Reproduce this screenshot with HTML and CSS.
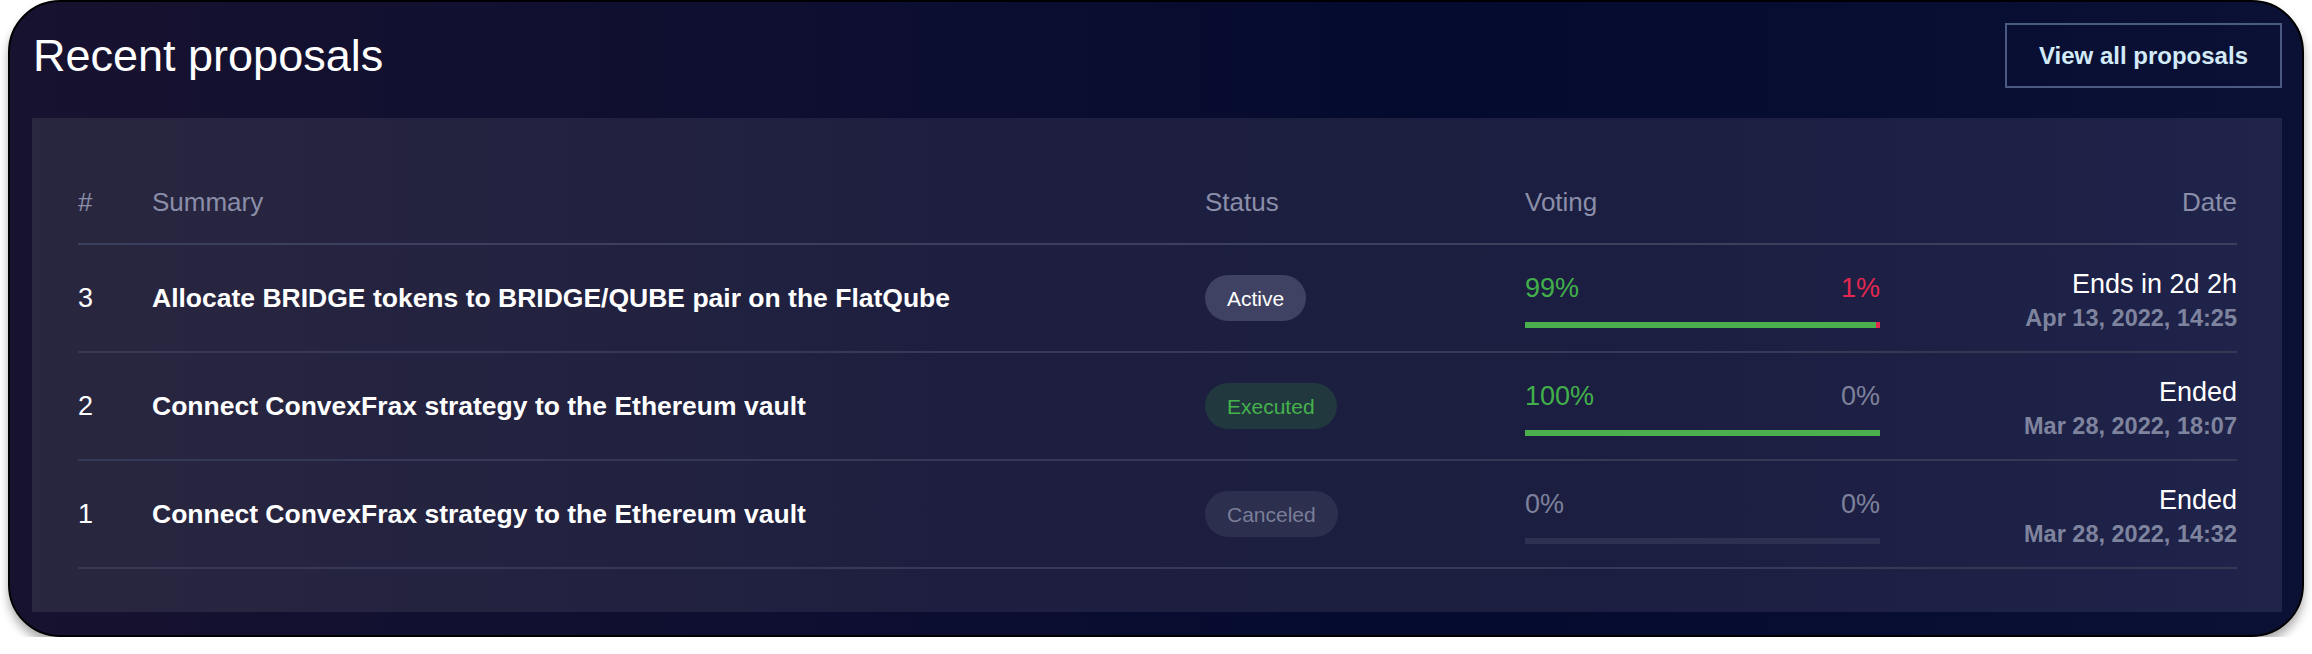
FILE: index.html
```html
<!DOCTYPE html>
<html lang="en">
<head>
<meta charset="utf-8">
<title>Recent proposals</title>
<link rel="stylesheet" href="styles.css">
</head>
<body>
<section class="card">
  <header class="card-head">
    <h2 class="card-title">Recent proposals</h2>
    <a class="btn-outline" href="#">View all proposals</a>
  </header>
  <div class="panel">
    <div class="row row-head">
      <div class="cell">#</div>
      <div class="cell">Summary</div>
      <div class="cell">Status</div>
      <div class="cell">Voting</div>
      <div class="cell cell-right">Date</div>
    </div>

    <div class="row">
      <div class="cell num">3</div>
      <div class="cell summary">Allocate BRIDGE tokens to BRIDGE/QUBE pair on the FlatQube</div>
      <div class="cell"><span class="pill pill-active">Active</span></div>
      <div class="cell voting">
        <div class="vote-nums"><span class="green">99%</span><span class="red">1%</span></div>
        <div class="bar"><span class="bar-yes" style="width:99%"></span><span class="bar-no" style="width:1%"></span></div>
      </div>
      <div class="cell date">
        <div class="date-main">Ends in 2d 2h</div>
        <div class="date-sub">Apr 13, 2022, 14:25</div>
      </div>
    </div>

    <div class="row">
      <div class="cell num">2</div>
      <div class="cell summary">Connect ConvexFrax strategy to the Ethereum vault</div>
      <div class="cell"><span class="pill pill-executed">Executed</span></div>
      <div class="cell voting">
        <div class="vote-nums"><span class="green">100%</span><span class="grey">0%</span></div>
        <div class="bar"><span class="bar-yes" style="width:100%"></span></div>
      </div>
      <div class="cell date">
        <div class="date-main">Ended</div>
        <div class="date-sub">Mar 28, 2022, 18:07</div>
      </div>
    </div>

    <div class="row">
      <div class="cell num">1</div>
      <div class="cell summary">Connect ConvexFrax strategy to the Ethereum vault</div>
      <div class="cell"><span class="pill pill-canceled">Canceled</span></div>
      <div class="cell voting">
        <div class="vote-nums"><span class="grey">0%</span><span class="grey">0%</span></div>
        <div class="bar bar-empty"></div>
      </div>
      <div class="cell date">
        <div class="date-main">Ended</div>
        <div class="date-sub">Mar 28, 2022, 14:32</div>
      </div>
    </div>
  </div>
</section>
</body>
</html>
```

FILE: styles.css
```css
* { box-sizing: border-box; }

html, body {
  margin: 0;
  padding: 0;
  background: #ffffff;
}

body {
  font-family: "Liberation Sans", Arial, sans-serif;
  color: #ffffff;
}

.card {
  margin: 0 8px;
  height: 637px;
  border: 2px solid #000000;
  border-radius: 52px;
  padding: 21px 20px 22px 22px;
  background: linear-gradient(90deg, #17122f 0%, #0c0e31 40%, #040b2f 62%, #0b1035 100%);
  box-shadow: 0 7px 10px rgba(0, 0, 0, 0.32);
}

.card-head {
  display: flex;
  align-items: center;
  justify-content: space-between;
  height: 65px;
  margin-bottom: 30px;
}

.card-title {
  margin: 0;
  font-size: 45px;
  font-weight: 400;
  line-height: 52px;
  padding-left: 1px;
  color: #ffffff;
}

.btn-outline {
  display: flex;
  align-items: center;
  justify-content: center;
  width: 277px;
  height: 65px;
  border: 2px solid #4b5a80;
  color: #d3eaf7;
  font-size: 24px;
  font-weight: 700;
  text-decoration: none;
}

.panel {
  height: 494px;
  padding: 0 45px 0 46px;
  background: linear-gradient(90deg, #29263f 0%, #1e1f40 40%, #1b1e40 70%, #20234a 100%);
}

.row {
  display: grid;
  grid-template-columns: 74px 1053px 320px 355px 1fr;
  align-items: center;
  height: 108px;
  border-bottom: 2px solid #363955;
}

.row-head {
  height: 127px;
  align-items: end;
  padding-bottom: 26px;
  color: #8a8ea8;
  font-size: 26px;
  line-height: 30px;
  border-bottom-color: #3d405c;
}

.cell-right { text-align: right; }

.num {
  font-size: 27px;
  line-height: 30px;
  color: #ffffff;
}

.summary {
  font-size: 26.5px;
  font-weight: 700;
  line-height: 30px;
  color: #ffffff;
}

.pill {
  display: inline-flex;
  align-items: center;
  height: 46px;
  padding: 0 22px;
  border-radius: 23px;
  font-size: 21px;
  line-height: 1;
}

.pill-active { background: #3f4262; color: #ffffff; }
.pill-executed { background: #21383f; color: #45b24c; }
.pill-canceled { background: #2c2f4e; color: #7a7e98; }

.voting {
  display: flex;
  flex-direction: column;
  padding-top: 4px;
}

.vote-nums {
  display: flex;
  justify-content: space-between;
  font-size: 27px;
  line-height: 30px;
}

.green { color: #42b04a; }
.red { color: #e2284f; }
.grey { color: #7d819b; }

.bar {
  display: flex;
  height: 6px;
  margin-top: 19px;
  background: #2d3050;
}

.bar-yes { display: block; height: 100%; background: #4caf4e; }
.bar-no { display: block; height: 100%; background: #e2284f; }

.date {
  text-align: right;
  padding-top: 4px;
}

.date-main {
  font-size: 27px;
  line-height: 30px;
  color: #ffffff;
}

.date-sub {
  margin-top: 5px;
  font-size: 23.5px;
  font-weight: 700;
  line-height: 28px;
  color: #7f849e;
}
```
